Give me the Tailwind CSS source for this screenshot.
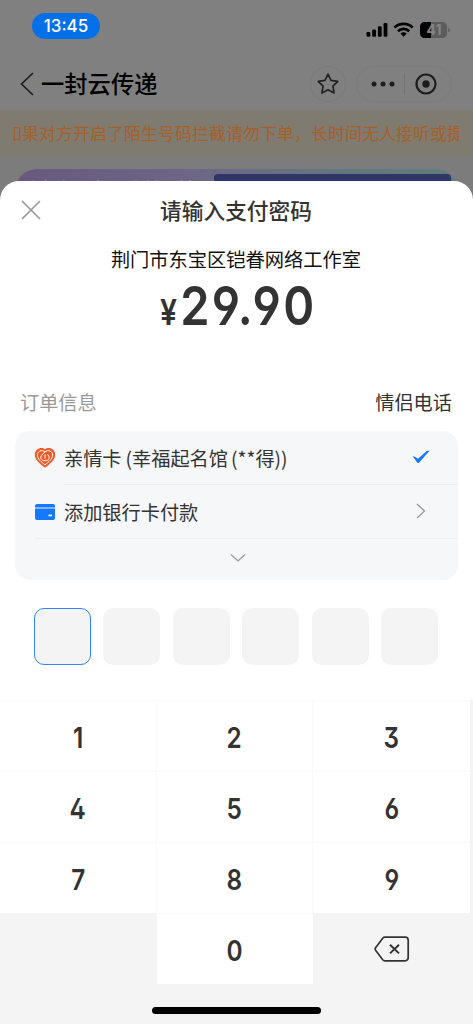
<!DOCTYPE html>
<html lang="zh-CN">
<head>
<meta charset="utf-8">
<title>支付</title>
<script src="https://cdn.jsdelivr.net/npm/@tailwindcss/browser@4"></script>
</head>
<body class="bg-[#808080] font-['Noto_Sans_CJK_SC',sans-serif] text-[#333]">
<div class="w-[473px] h-[1024px] overflow-hidden flex flex-col">

  <!-- Dimmed page -->
  <div class="h-[201px] shrink-0 flex flex-col bg-[#808080]">
    <div class="h-[56px] shrink-0 flex items-start justify-between pl-8 pr-[22px] pt-[13px]">
      <div class="w-[68px] h-[26px] rounded-full bg-[#0470e8] text-white flex items-center justify-center font-['Inter',sans-serif] font-medium text-[17px] leading-none">13:45</div>
      <svg class="mt-[7px]" width="86" height="20" viewBox="0 0 86 20">
        <g fill="#000"><rect x="1.500" y="12" width="3.800" height="4.800" rx="1.200"/><rect x="7.200" y="9.500" width="3.800" height="7.300" rx="1.200"/><rect x="12.900" y="6.200" width="3.800" height="10.600" rx="1.200"/><rect x="18.600" y="3" width="3.800" height="13.800" rx="1.200"/></g>
        <g fill="none" stroke="#000" stroke-width="2.700"><path d="M29.500 7.600a13 13 0 0 1 18.200 0"/><path d="M33 11.200a8 8 0 0 1 11.200 0"/></g>
        <path d="M35.500 13.600a4.500 4.500 0 0 1 6.200 0l-3.100 3.200z" fill="#000"/>
        <path d="M60 2h17.500a4.500 4.500 0 0 1 4.500 4.500v7a4.500 4.500 0 0 1-4.500 4.500H60z" fill="#5c5c5c"/>
        <path d="M66 2v16h-6.500a4.500 4.500 0 0 1-4.500-4.500v-7a4.500 4.500 0 0 1 4.500-4.500z" fill="#000"/>
        <path d="M83.200 7.500q1.800 1 1.800 2.500t-1.800 2.500z" fill="#5c5c5c"/>
        <text x="69" y="15" text-anchor="middle" font-family="Inter" font-weight="700" font-size="14" fill="#858585">41</text>
      </svg>
    </div>
    <div class="h-[54px] shrink-0 flex items-center justify-between pl-5 pr-[21px] pt-px">
      <div class="flex items-center gap-[7px]">
        <svg width="14" height="24" viewBox="0 0 14 24" fill="none" stroke="#1a1a1a" stroke-width="1.600"><path d="M13 1L1.500 12 13 23"/></svg>
        <span class="text-[23.3px] font-medium leading-none text-black">一封云传递</span>
      </div>
      <div class="flex items-center gap-[10px]">
        <div class="size-[36px] rounded-full border border-[#7b7b7b] flex items-center justify-center">
          <svg width="24" height="24" viewBox="0 0 24 24" fill="none" stroke="#222" stroke-width="1.700" stroke-linejoin="round"><path d="M12 2.200l3 6.200 6.800 1-4.900 4.800 1.200 6.800-6.100-3.200L5.900 21l1.200-6.800-4.900-4.800 6.800-1z"/></svg>
        </div>
        <div class="w-[96px] h-[36px] rounded-full border border-[#7b7b7b] flex items-center pl-[13px]">
          <svg width="26" height="6" viewBox="0 0 26 6" fill="#1c1c1c"><circle cx="4" cy="3" r="2.500"/><circle cx="13" cy="3" r="2.500"/><circle cx="22" cy="3" r="2.500"/></svg>
          <div class="w-px h-[22px] bg-[#737373] ml-[8px]"></div>
          <svg class="ml-[10px]" width="22" height="22" viewBox="0 0 22 22"><circle cx="11" cy="11" r="9.500" fill="none" stroke="#1c1c1c" stroke-width="2.200"/><circle cx="11" cy="11" r="3.700" fill="#1c1c1c"/></svg>
        </div>
      </div>
    </div>
    <div class="h-[46px] shrink-0 bg-[#7f7b71] px-[13px] flex items-center">
      <div class="w-[446px] overflow-hidden whitespace-nowrap text-[17px] leading-[30px] text-[#a66026]"><span class="-ml-2">如果对方开启了陌生号码拦截请勿下单，长时间无人接听或提前挂断</span></div>
    </div>
    <div class="flex-1 bg-[#7c7c7c] px-[15px] pt-[13px]">
      <div class="h-full rounded-t-[22px] bg-linear-to-r from-[#69587f] via-[#6d6686] via-40% to-[#5c807b] pl-[13px] pr-[7px] pt-[5px] flex justify-between overflow-hidden">
        <span class="pt-[3px] text-[28px] leading-[30px] text-[#8b7d91] whitespace-nowrap">情侣电话传递</span>
        <div class="w-[237px] h-full rounded-t-sm bg-[#303568]"></div>
      </div>
    </div>
  </div>

  <!-- Payment sheet -->
  <div class="-mt-[20px] h-[843px] shrink-0 rounded-t-[19px] bg-white flex flex-col overflow-hidden relative">
    <div class="h-[57px] shrink-0 grid grid-cols-[40px_1fr_40px] items-center px-[20px]">
      <svg width="22" height="22" viewBox="0 0 22 22" stroke="#999" stroke-width="1.700"><path d="M2 2l18 18M20 2L2 20"/></svg>
      <h1 class="-ml-px text-center text-[21.7px] font-medium leading-none">请输入支付密码</h1>
    </div>
    <div class="-ml-px text-center text-[19.25px] leading-[43px] h-[41px] text-[#111]">荆门市东宝区铠眷网络工作室</div>
    <div class="h-[54px] flex justify-center items-baseline font-['Inter',sans-serif] leading-[54px] [font-feature-settings:'cv03','cv04','ss01']">
      <span class="inline-block w-[22px] text-[36px] font-semibold origin-left scale-x-[.84]">¥</span>
      <span class="inline-block w-[131px] text-[54px] font-semibold origin-left scale-x-[.87] tracking-[2.600px] whitespace-nowrap [text-indent:-2px]">29.90</span>
    </div>
    <div class="h-[98px] flex items-end justify-between px-[20px] pr-[21px] pb-[15px] text-[19.2px] leading-[28px]">
      <span class="text-[#999]">订单信息</span><span>情侣电话</span>
    </div>
    <div class="mx-[15px] h-[149px] shrink-0 rounded-[15px] bg-[#f6f7f9] flex flex-col text-[19.2px]">
      <div class="h-[53px] flex items-center pl-[19px]">
        <svg width="22" height="22" viewBox="0 0 22 22"><path d="M11 20.700C5.500 16.500.8 12.700.8 7.700.8 1.500 7.500-.8 11 2.200c3.500-3 10.200-.7 10.200 5.500 0 5-4.700 8.800-10.200 13z" fill="#f05a28"/><g fill="none" stroke="#fff" stroke-width="1" stroke-linejoin="round"><path d="M11 4.800C7.800 2.300 3.400 4 3.400 8.200c0 3.800 4 6.800 7.600 9.600 3.600-2.800 7.600-5.800 7.600-9.600 0-4.200-4.400-5.900-7.600-3.400L7.700 8.200c-2 2.300-.5 5.600 3.300 5.600s5.300-3.300 3.300-5.600L13 7.400"/><path d="M11 7.500v4"/></g></svg>
        <span class="ml-[8px] pt-[2px] flex-1 whitespace-nowrap">亲情卡<span class="ml-1">(</span>幸福起名馆<span class="ml-[3px]">(</span>**得))</span>
        <svg class="mr-[28px] -mt-px" width="18" height="14" viewBox="0 0 18 14" fill="#1677ff"><path d="M.5 6.200Q3.500 6.200 6 8.800L15 .8h2.600L7 12.700q-1 .9-1.900-.2Q3 9 .5 6.200z"/></svg>
      </div>
      <div class="h-[54px] flex items-center pl-[20px]">
        <svg class="mt-[2px]" width="20" height="16" viewBox="0 0 20 16"><rect width="20" height="16" rx="2" fill="#1677ff"/><path d="M0 4h20" stroke="#c8defc" stroke-width="1.200"/><rect x="13.500" y="10.600" width="3.500" height="1.700" fill="#fff"/></svg>
        <div class="ml-[9px] h-full flex-1 flex items-center border-t border-[#eceef0]">
          <span class="pt-[2px] flex-1">添加银行卡付款</span>
          <svg class="mr-[32px] -mt-px" width="10" height="16" viewBox="0 0 10 16" fill="none" stroke="#999" stroke-width="1.300"><path d="M1 1l7.500 7L1 15"/></svg>
        </div>
      </div>
      <div class="ml-[20px] flex-1 border-t border-[#eceef0] flex justify-center pr-[17px] pt-[14px]">
        <svg width="16" height="10" viewBox="0 0 16 10" fill="none" stroke="#999" stroke-width="1.200"><path d="M1 1.500l7 6.500 7-6.500"/></svg>
      </div>
    </div>
    <div class="mt-[28px] mb-[35px] flex justify-between pl-[34px] pr-[35px]">
      <div class="size-[57px] rounded-[10px] bg-[#f4f4f4] border-[1.5px] border-[#3386f8]"></div>
      <div class="size-[57px] rounded-[10px] bg-[#f4f4f4]"></div>
      <div class="size-[57px] rounded-[10px] bg-[#f4f4f4]"></div>
      <div class="size-[57px] rounded-[10px] bg-[#f4f4f4]"></div>
      <div class="size-[57px] rounded-[10px] bg-[#f4f4f4]"></div>
      <div class="size-[57px] rounded-[10px] bg-[#f4f4f4]"></div>
    </div>

    <!-- Keypad -->
    <div class="flex-1 bg-[#f4f4f4] flex flex-col">
      <div class="w-[470px] grid grid-cols-[157px_156px_157px] grid-rows-[71px_71px_71px_71px] font-['Inter',sans-serif] text-[29px] font-semibold [font-feature-settings:'cv03','cv04','ss01'] *:flex *:items-center *:justify-center *:pt-1 *:border-[#f9f9f9]">
        <div class="bg-white border-t border-r"><span class="scale-x-[.84]">1</span></div>
        <div class="bg-white border-t border-r"><span class="scale-x-[.84]">2</span></div>
        <div class="bg-white border-t"><span class="scale-x-[.84]">3</span></div>
        <div class="bg-white border-t border-r"><span class="scale-x-[.84]">4</span></div>
        <div class="bg-white border-t border-r"><span class="scale-x-[.84]">5</span></div>
        <div class="bg-white border-t"><span class="scale-x-[.84]">6</span></div>
        <div class="bg-white border-t border-r"><span class="scale-x-[.84]">7</span></div>
        <div class="bg-white border-t border-r"><span class="scale-x-[.84]">8</span></div>
        <div class="bg-white border-t"><span class="scale-x-[.84]">9</span></div>
        <div></div>
        <div class="bg-white border-t"><span class="scale-x-[.84]">0</span></div>
        <div class="pb-1"><svg width="36" height="28" viewBox="0 0 36 28" fill="none" stroke="#333" stroke-width="1.700"><path d="M11 2.200h20.200a3 3 0 0 1 3 3v17.600a3 3 0 0 1-3 3H11a3 3 0 0 1-2.300-1L2.200 16.100a3 3 0 0 1 0-4.200L8.700 3.200a3 3 0 0 1 2.300-1z"/><path d="M16 9.800l9 8.600M25 9.800l-9 8.600" stroke-width="2"/></svg></div>
      </div>
      <div class="mt-[23px] mx-auto w-[169px] h-[7px] rounded-full bg-black"></div>
    </div>
  </div>
</div>
</body>
</html>
